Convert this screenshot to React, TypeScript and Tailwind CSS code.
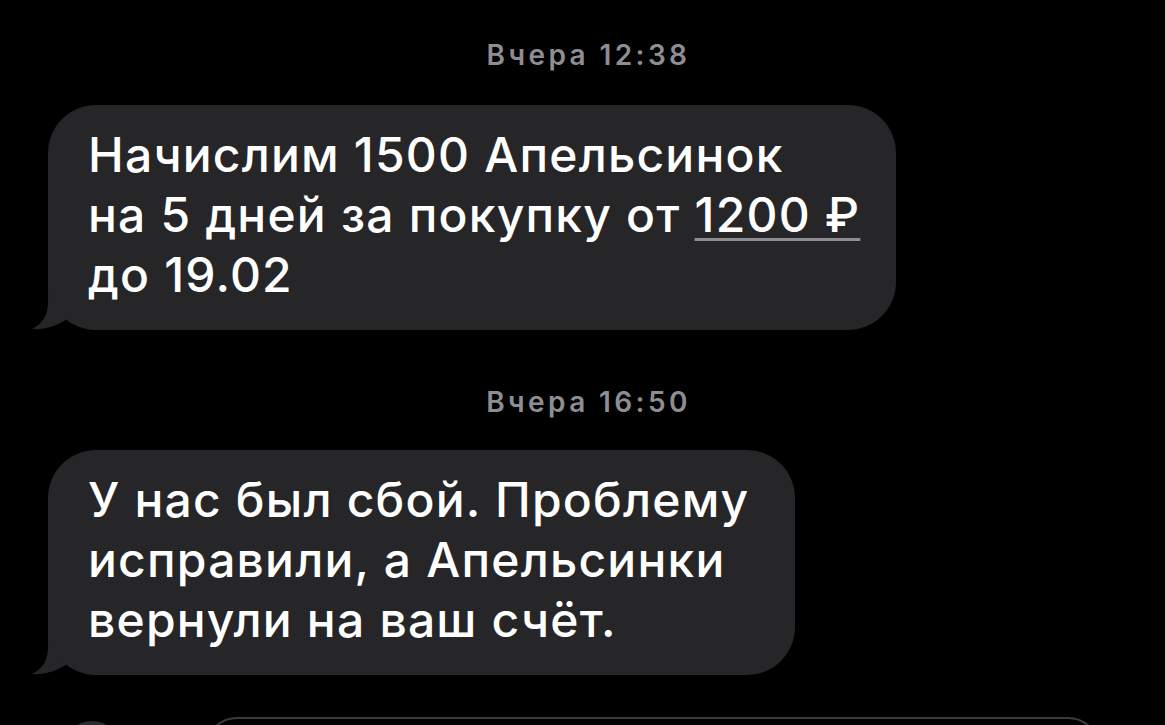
import React from 'react';

function Tail() {
  return (
    <svg
      className="absolute -left-[18px] bottom-0 h-[50px] w-[70px]"
      viewBox="0 0 70 50"
      fill="#262628"
    >
      <path d="M18 0 L18 22 C18 36 12 44 2 49 C14 50 27 46 37 39 C46 46 56 50 70 50 L70 0 Z" />
    </svg>
  );
}

function Stamp({ text }: { text: string }) {
  return (
    <div className="pl-[12px] text-center text-[28px] font-semibold leading-[34px] tracking-[3.4px] text-[#8d8d92]">
      {text}
    </div>
  );
}

function Bubble({ children, width }: { children: React.ReactNode; width: string }) {
  return (
    <div className={`relative ml-[48px] ${width}`}>
      <div className="relative z-10 rounded-[48px] bg-[#262628] pl-[40px] pb-[25px] pt-[20px] text-[48px] font-medium leading-[60px] tracking-[1.2px] text-white">
        {children}
      </div>
      <Tail />
    </div>
  );
}

export default function App() {
  return (
    <div
      className="h-[725px] w-[1165px] overflow-hidden bg-black"
      style={{ fontFamily: 'Inter, "Noto Sans", sans-serif' }}
    >
      <div className="flex flex-col pt-[38px]">
        <Stamp text="Вчера 12:38" />
        <div className="mt-[33px]">
          <Bubble width="w-[848px]">
            Начислим 1500 Апельсинок
            <br />
            на 5 дней за покупку от{' '}
            <span className="underline decoration-[#8d8d92] decoration-[3px] underline-offset-[6px]">
              1200 ₽
            </span>
            <br />
            до 19.02
          </Bubble>
        </div>
        <div className="mt-[55px]">
          <Stamp text="Вчера 16:50" />
        </div>
        <div className="mt-[31px]">
          <Bubble width="w-[747px]">
            У нас был сбой. Проблему
            <br />
            исправили, а Апельсинки
            <br />
            вернули на ваш счёт.
          </Bubble>
        </div>
        <div className="mt-[42px] flex items-start">
          <div className="ml-[62px] mt-[4px] h-[60px] w-[60px] shrink-0 rounded-full bg-[#2c2c2e]" />
          <div className="ml-[83px] h-[64px] w-[895px] rounded-[32px] border-2 border-[#3a3a3c]" />
        </div>
      </div>
    </div>
  );
}
